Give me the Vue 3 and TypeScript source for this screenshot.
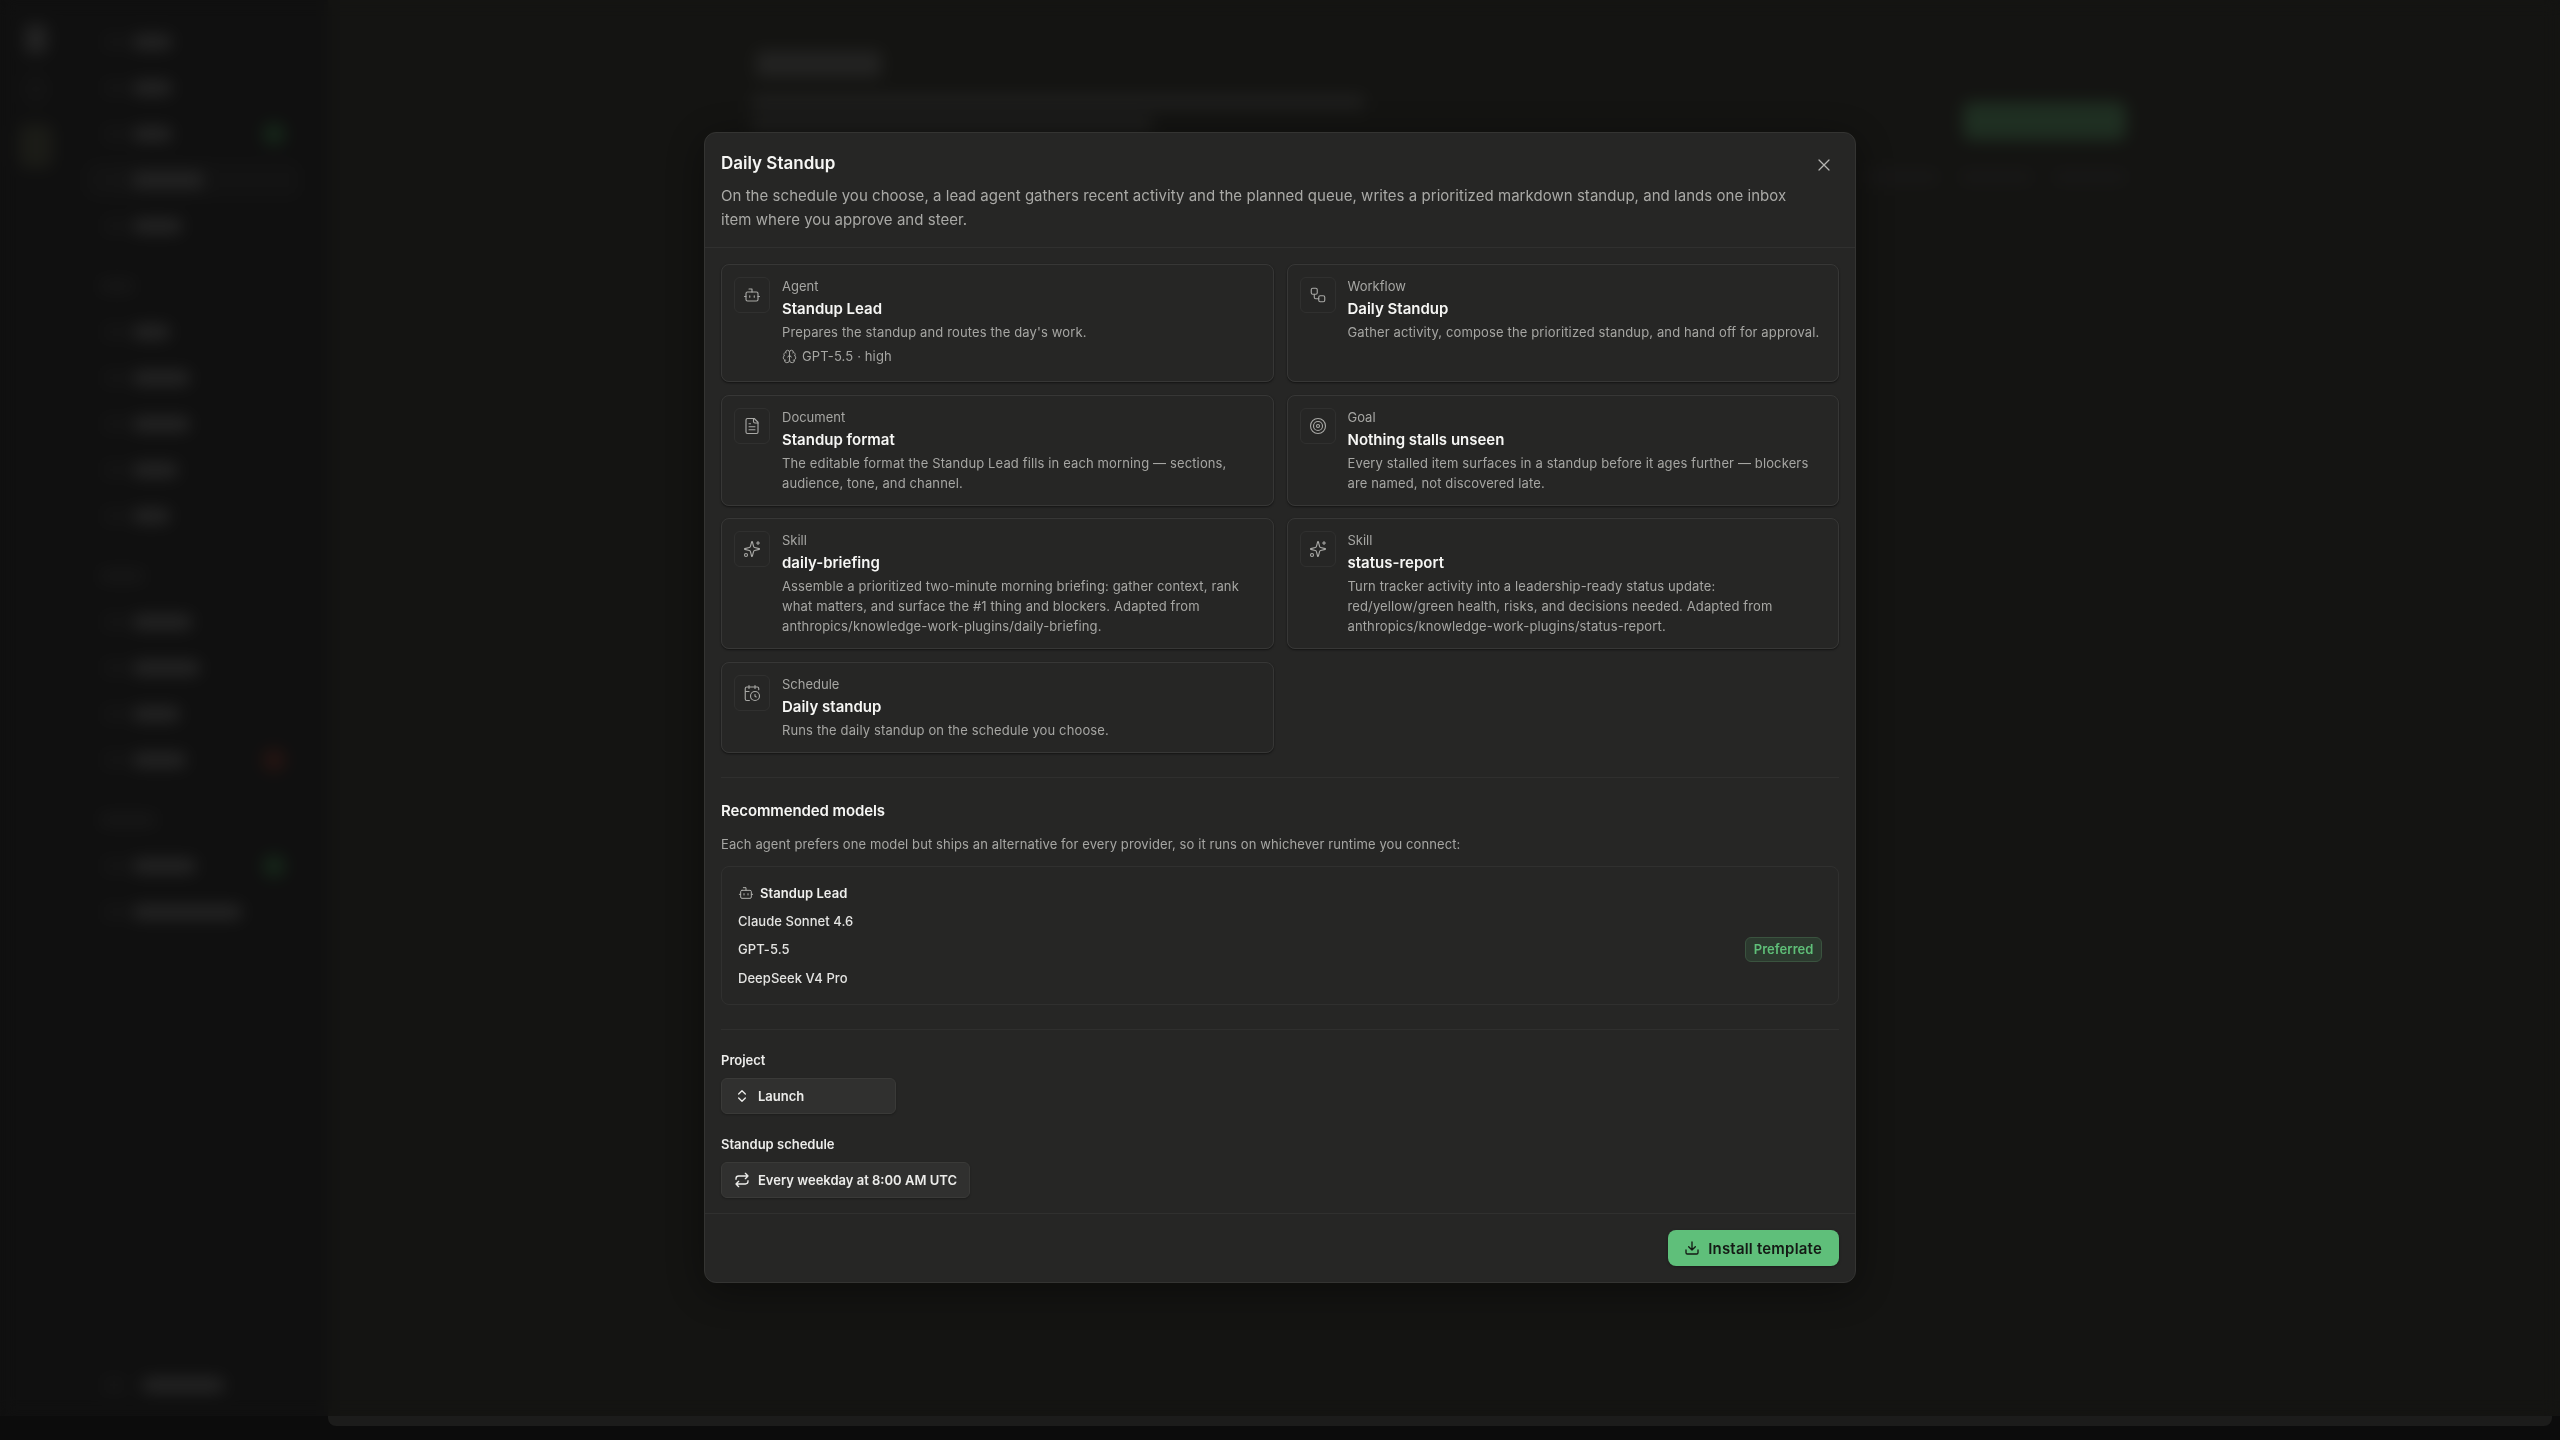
<script setup lang="ts">
const icons: Record<string, string> = {
  bot: '<path d="M12 8V4H8"/><rect x="4" y="8" width="16" height="12" rx="2"/><path d="M2 14h2M20 14h2M15 13v2M9 13v2"/>',
  workflow: '<rect x="3" y="3" width="8" height="8" rx="2"/><path d="M7 11v4a2 2 0 0 0 2 2h4"/><rect x="13" y="13" width="8" height="8" rx="2"/>',
  file: '<path d="M15 2H6a2 2 0 0 0-2 2v16a2 2 0 0 0 2 2h12a2 2 0 0 0 2-2V7Z"/><path d="M14 2v4a2 2 0 0 0 2 2h4M10 9H8M16 13H8M16 17H8"/>',
  target: '<circle cx="12" cy="12" r="10"/><circle cx="12" cy="12" r="6"/><circle cx="12" cy="12" r="2"/>',
  sparkles: '<path d="M9.937 15.5A2 2 0 0 0 8.5 14.063l-6.135-1.582a.5.5 0 0 1 0-.962L8.5 9.936A2 2 0 0 0 9.937 8.5l1.582-6.135a.5.5 0 0 1 .963 0L14.063 8.5A2 2 0 0 0 15.5 9.937l6.135 1.581a.5.5 0 0 1 0 .964L15.5 14.063a2 2 0 0 0-1.437 1.437l-1.582 6.135a.5.5 0 0 1-.963 0z"/><path d="M20 2v4M22 4h-4"/><circle cx="4" cy="20" r="2"/>',
  calendar: '<path d="M16 14v2.2l1.6 1M16 2v4M21 7.5V6a2 2 0 0 0-2-2H5a2 2 0 0 0-2 2v14a2 2 0 0 0 2 2h3.5M3 10h5M8 2v4"/><circle cx="16" cy="16" r="6"/>',
  brain: '<path d="M12 5a3 3 0 1 0-5.997.125 4 4 0 0 0-2.526 5.77 4 4 0 0 0 .556 6.588A4 4 0 1 0 12 18Z"/><path d="M12 5a3 3 0 1 1 5.997.125 4 4 0 0 1 2.526 5.77 4 4 0 0 1-.556 6.588A4 4 0 1 1 12 18Z"/><path d="M15 13a4.5 4.5 0 0 1-3-4 4.5 4.5 0 0 1-3 4M17.599 6.5a3 3 0 0 0 .399-1.375M6.003 5.125A3 3 0 0 0 6.401 6.5M3.477 10.896a4 4 0 0 1 .585-.396M19.938 10.5a4 4 0 0 1 .585.396M6 18a4 4 0 0 1-1.967-.516M19.967 17.484A4 4 0 0 1 18 18"/>',
  updown: '<path d="m7 15 5 5 5-5M7 9l5-5 5 5"/>',
  repeat: '<path d="m17 2 4 4-4 4M3 11v-1a4 4 0 0 1 4-4h14M7 22l-4-4 4-4M21 13v1a4 4 0 0 1-4 4H3"/>',
  download: '<path d="M12 15V3M21 15v4a2 2 0 0 1-2 2H5a2 2 0 0 1-2-2v-4M7 10l5 5 5-5"/>',
  close: '<path d="M18 6 6 18M6 6l12 12"/>',
};

interface Part {
  kind: string;
  name: string;
  desc: string;
  icon: string;
  model?: string;
}

const parts: Part[] = [
  { kind: 'Agent', name: 'Standup Lead', desc: "Prepares the standup and routes the day's work.", icon: 'bot', model: 'GPT-5.5 · high' },
  { kind: 'Workflow', name: 'Daily Standup', desc: 'Gather activity, compose the prioritized standup, and hand off for approval.', icon: 'workflow' },
  { kind: 'Document', name: 'Standup format', desc: 'The editable format the Standup Lead fills in each morning — sections, audience, tone, and channel.', icon: 'file' },
  { kind: 'Goal', name: 'Nothing stalls unseen', desc: 'Every stalled item surfaces in a standup before it ages further — blockers are named, not discovered late.', icon: 'target' },
  { kind: 'Skill', name: 'daily-briefing', desc: 'Assemble a prioritized two-minute morning briefing: gather context, rank what matters, and surface the #1 thing and blockers. Adapted from anthropics/knowledge-work-plugins/daily-briefing.', icon: 'sparkles' },
  { kind: 'Skill', name: 'status-report', desc: 'Turn tracker activity into a leadership-ready status update: red/yellow/green health, risks, and decisions needed. Adapted from anthropics/knowledge-work-plugins/status-report.', icon: 'sparkles' },
  { kind: 'Schedule', name: 'Daily standup', desc: 'Runs the daily standup on the schedule you choose.', icon: 'calendar' },
];

const models = [
  { name: 'Claude Sonnet 4.6', preferred: false },
  { name: 'GPT-5.5', preferred: true },
  { name: 'DeepSeek V4 Pro', preferred: false },
];

// blurred app behind the dialog, only the rough shapes show through
const navItems = [
  { w: 38 }, { w: 38 }, { w: 38, dot: 'green' }, { w: 70, active: true }, { w: 48 },
  { w: 34, gap: true }, { w: 36 }, { w: 56 }, { w: 56 }, { w: 44 }, { w: 36 },
  { w: 44, gap: true }, { w: 58 }, { w: 66 }, { w: 46 }, { w: 52, dot: 'red' },
  { w: 56, gap: true }, { w: 62, dot: 'green' }, { w: 108 },
];
</script>

<template>
  <div class="page">
    <div class="shell">
      <div class="rail">
        <span class="rail-dot"></span>
        <span class="rail-dot faint"></span>
        <span class="rail-dot olive"></span>
      </div>
      <aside class="sidebar">
        <div
          v-for="(item, i) in navItems"
          :key="i"
          class="nav-item"
          :class="{ active: item.active, 'nav-gap': item.gap }"
        >
          <span v-if="!item.gap" class="nav-ico"></span>
          <span class="nav-text" :style="{ width: item.w + 'px' }"></span>
          <span v-if="item.dot" class="nav-dot" :class="item.dot"></span>
        </div>
        <div class="nav-user">
          <span class="nav-ico"></span>
          <span class="user-name"></span>
        </div>
      </aside>
      <main class="main">
        <div class="main-head">
          <div>
            <div class="main-title"></div>
            <div class="main-sub"></div>
            <div class="main-sub short"></div>
          </div>
          <div class="main-btn"></div>
        </div>
        <div class="main-tabs">
          <span></span><span></span><span></span>
        </div>
      </main>
    </div>
    <div class="strip"></div>

    <div class="overlay">
      <section class="modal">
        <header class="modal-head">
          <h2 class="modal-title">Daily Standup</h2>
          <p class="modal-desc">On the schedule you choose, a lead agent gathers recent activity and the planned queue, writes a prioritized markdown standup, and lands one inbox item where you approve and steer.</p>
          <svg class="icon close" viewBox="0 0 24 24" v-html="icons.close"></svg>
        </header>

        <div class="modal-body">
          <div class="parts">
            <article v-for="part in parts" :key="part.kind + part.name" class="part">
              <div class="part-icon">
                <svg class="icon" viewBox="0 0 24 24" v-html="icons[part.icon]"></svg>
              </div>
              <div class="part-text">
                <div class="part-kind">{{ part.kind }}</div>
                <div class="part-name">{{ part.name }}</div>
                <div class="part-desc">{{ part.desc }}</div>
                <div v-if="part.model" class="part-model">
                  <svg class="icon small" viewBox="0 0 24 24" v-html="icons.brain"></svg>
                  {{ part.model }}
                </div>
              </div>
            </article>
          </div>

          <hr class="rule" />

          <h3 class="section-title">Recommended models</h3>
          <p class="section-sub">Each agent prefers one model but ships an alternative for every provider, so it runs on whichever runtime you connect:</p>
          <div class="models">
            <div class="model-row agent">
              <span class="agent-name">
                <svg class="icon" viewBox="0 0 24 24" v-html="icons.bot"></svg>
                Standup Lead
              </span>
            </div>
            <div v-for="m in models" :key="m.name" class="model-row">
              <span>{{ m.name }}</span>
              <span v-if="m.preferred" class="badge">Preferred</span>
            </div>
          </div>

          <hr class="rule" />

          <label class="field-label">Project</label>
          <button class="field-btn project">
            <svg class="icon" viewBox="0 0 24 24" v-html="icons.updown"></svg>
            Launch
          </button>
          <label class="field-label second">Standup schedule</label>
          <button class="field-btn">
            <svg class="icon" viewBox="0 0 24 24" v-html="icons.repeat"></svg>
            Every weekday at 8:00 AM UTC
          </button>
        </div>

        <footer class="modal-foot">
          <button class="install">
            <svg class="icon" viewBox="0 0 24 24" v-html="icons.download"></svg>
            Install template
          </button>
        </footer>
      </section>
    </div>
  </div>
</template>

<style>
body {
  margin: 0;
  background: #0c0c0c;
}
</style>

<style scoped>
.page {
  position: relative;
  width: 2560px;
  height: 1440px;
  overflow: hidden;
  background: #0c0c0c;
  font-family: Inter, "Liberation Sans", sans-serif;
}

.shell {
  display: flex;
  height: 1416px;
}

.rail {
  width: 72px;
  flex-shrink: 0;
  display: flex;
  flex-direction: column;
  align-items: center;
  gap: 20px;
  padding-top: 24px;
  box-sizing: border-box;
  background: #202020;
}

.rail-dot {
  width: 22px;
  height: 30px;
  border-radius: 8px;
  background: #484848;
}
.rail-dot.faint {
  background: #272727;
}
.rail-dot.olive {
  width: 34px;
  height: 44px;
  background: #36372e;
}

.sidebar {
  width: 256px;
  flex-shrink: 0;
  display: flex;
  flex-direction: column;
  box-sizing: border-box;
  padding-top: 24px;
  background: #202020;
}

.nav-item {
  height: 36px;
  margin: 0 28px 10px 13px;
  display: flex;
  align-items: center;
  gap: 8px;
  padding: 0 15px 0 18px;
  border-radius: 8px;
}
.nav-item.active {
  background: #262626;
}
.nav-item.nav-gap {
  margin-top: 14px;
  padding-left: 15px;
}

.nav-ico {
  width: 22px;
  height: 16px;
  border-radius: 4px;
  background: #2a2a2a;
}

.nav-text {
  height: 14px;
  border-radius: 3px;
  background: #4c4c4c;
}
.nav-gap .nav-text {
  background: #2e2e2e;
}

.nav-dot {
  width: 22px;
  height: 22px;
  margin-left: auto;
  border-radius: 10px;
}
.nav-dot.green {
  background: #2c4e33;
}
.nav-dot.red {
  background: #4e2a24;
}

.nav-user {
  display: flex;
  align-items: center;
  gap: 18px;
  margin: auto 0 23px 31px;
}

.user-name {
  width: 80px;
  height: 14px;
  border-radius: 3px;
  background: #4c4c4c;
}

.main {
  flex: 1;
  padding: 51px 434px 0 424px;
  background: #282824;
}

.main-head {
  display: flex;
  justify-content: space-between;
  align-items: flex-start;
}

.main-title {
  width: 125px;
  height: 26px;
  margin-left: 4px;
  border-radius: 4px;
  background: #464644;
}

.main-sub {
  width: 612px;
  height: 14px;
  margin-top: 18px;
  border-radius: 3px;
  background: #3e3e3c;
}
.main-sub.short {
  width: 400px;
  margin-top: 8px;
}

.main-btn {
  width: 163px;
  height: 38px;
  margin-top: 51px;
  border-radius: 8px;
  background: #3e5e44;
}

.main-tabs {
  display: flex;
  justify-content: flex-end;
  gap: 22px;
  margin-top: 30px;
}
.main-tabs span {
  width: 72px;
  height: 14px;
  border-radius: 3px;
  background: #302f2e;
}

.strip {
  height: 10px;
  margin-left: 328px;
  margin-right: 8px;
  border-radius: 0 0 8px 8px;
  background: #1c1c1b;
}

.overlay {
  position: absolute;
  inset: 0 0 24px 0;
  display: flex;
  justify-content: center;
  align-items: flex-start;
  padding-top: 132px;
  box-sizing: border-box;
  background: rgba(0, 0, 0, 0.5);
  backdrop-filter: blur(8px);
}

.modal {
  width: 1152px;
  height: 1151px;
  display: flex;
  flex-direction: column;
  box-sizing: border-box;
  border: 1px solid #343432;
  border-radius: 12px;
  background: #262625;
  box-shadow: 0 8px 40px rgba(0, 0, 0, 0.4);
}

.modal-head {
  position: relative;
  padding: 18px 16px 15px;
  border-bottom: 1px solid #30302f;
}

.modal-title {
  margin: 0;
  font-size: 17px;
  font-weight: 600;
  line-height: 24px;
  color: #f6f6f4;
}

.modal-desc {
  max-width: 1075px;
  margin: 9px 0 0;
  font-size: 15px;
  line-height: 24px;
  letter-spacing: 0.04px;
  color: #a9a9a6;
}

.icon {
  width: 16px;
  height: 16px;
  flex-shrink: 0;
  fill: none;
  stroke: currentColor;
  stroke-width: 2;
  stroke-linecap: round;
  stroke-linejoin: round;
}
.icon.small {
  width: 15px;
  height: 15px;
  stroke-width: 1.5;
}

.close {
  position: absolute;
  top: 22px;
  right: 21px;
  width: 20px;
  height: 20px;
  stroke-width: 1.5;
  color: #b5b5b2;
}

.modal-body {
  flex: 1;
  min-height: 0;
  padding: 16px 16px 16px;
}

.parts {
  display: grid;
  grid-template-columns: 1fr 1fr;
  gap: 12.6px 13px;
  align-items: stretch;
}

.part {
  display: flex;
  gap: 12px;
  padding: 12px;
  border: 1px solid #373736;
  border-radius: 8px;
  box-shadow: 0 1px 2px rgba(0, 0, 0, 0.5);
}

.part-icon {
  width: 34px;
  height: 34px;
  flex-shrink: 0;
  display: flex;
  align-items: center;
  justify-content: center;
  border: 1px solid #30302f;
  border-radius: 6px;
  color: #a9a9a6;
}
.part-icon .icon {
  width: 18px;
  height: 18px;
  stroke-width: 1.5;
}

.part-kind {
  margin-bottom: 1px;
  font-size: 13px;
  line-height: 19px;
  color: #a6a6a3;
}

.part-name {
  font-size: 15px;
  font-weight: 600;
  line-height: 24px;
  color: #f6f6f4;
}

.part-desc {
  margin-top: 1px;
  padding-right: 4px;
  font-size: 13px;
  line-height: 20px;
  letter-spacing: 0.13px;
  color: #a6a6a3;
}

.part-model {
  display: flex;
  align-items: center;
  gap: 5px;
  margin-top: 2px;
  padding-bottom: 1px;
  font-size: 13px;
  line-height: 24px;
  letter-spacing: 0.13px;
  color: #a6a6a3;
}

.rule {
  height: 1px;
  margin: 24px 0 0;
  border: none;
  background: #2f2f2e;
}

.section-title {
  margin: 21px 0 0;
  font-size: 15px;
  font-weight: 600;
  line-height: 24px;
  letter-spacing: -0.1px;
  color: #f6f6f4;
}

.section-sub {
  margin: 11px 0 0;
  font-size: 13px;
  line-height: 20px;
  letter-spacing: 0.1px;
  color: #a6a6a3;
}

.models {
  display: flex;
  flex-direction: column;
  gap: 8.33px;
  margin-top: 12px;
  padding: 16px;
  border: 1px solid #30302f;
  border-radius: 8px;
  font-size: 13px;
  font-weight: 500;
  letter-spacing: 0.05px;
  color: #e4e4e2;
}

.model-row {
  height: 20px;
  display: flex;
  align-items: center;
  justify-content: space-between;
}

.agent-name {
  display: flex;
  align-items: center;
  gap: 6px;
  font-weight: 600;
  color: #f0f0ee;
}
.agent-name .icon {
  stroke-width: 1.5;
  color: #b0b0ad;
}

.badge {
  height: 25px;
  display: flex;
  align-items: center;
  box-sizing: border-box;
  padding: 0 7.5px;
  border: 1px solid #3a533f;
  border-radius: 6px;
  background: #2c3a2f;
  font-size: 13px;
  font-weight: 600;
  color: #5fbf78;
}

.field-label {
  display: block;
  margin-top: 20.3px;
  font-size: 13px;
  font-weight: 600;
  line-height: 20px;
  color: #ececea;
}
.field-label.second {
  margin-top: 20px;
}

.field-btn {
  display: flex;
  align-items: center;
  gap: 8px;
  height: 36px;
  margin-top: 8px;
  padding: 0 12px;
  border: 1px solid #3a3a38;
  border-radius: 6px;
  background: #30302f;
  box-shadow: 0 1px 2px rgba(0, 0, 0, 0.25);
  font-family: inherit;
  font-size: 13px;
  font-weight: 600;
  color: #ececea;
}
.field-btn.project {
  width: 175px;
}

.modal-foot {
  display: flex;
  justify-content: flex-end;
  padding: 16px;
  border-top: 1px solid #30302f;
}

.install {
  display: flex;
  align-items: center;
  gap: 8px;
  height: 36px;
  padding: 0 17px 0 16px;
  border: none;
  border-radius: 8px;
  background: #5fbf7a;
  box-shadow: 0 1px 3px rgba(0, 0, 0, 0.3);
  font-family: inherit;
  font-size: 15px;
  font-weight: 600;
  letter-spacing: 0.2px;
  color: #141a15;
}
</style>
